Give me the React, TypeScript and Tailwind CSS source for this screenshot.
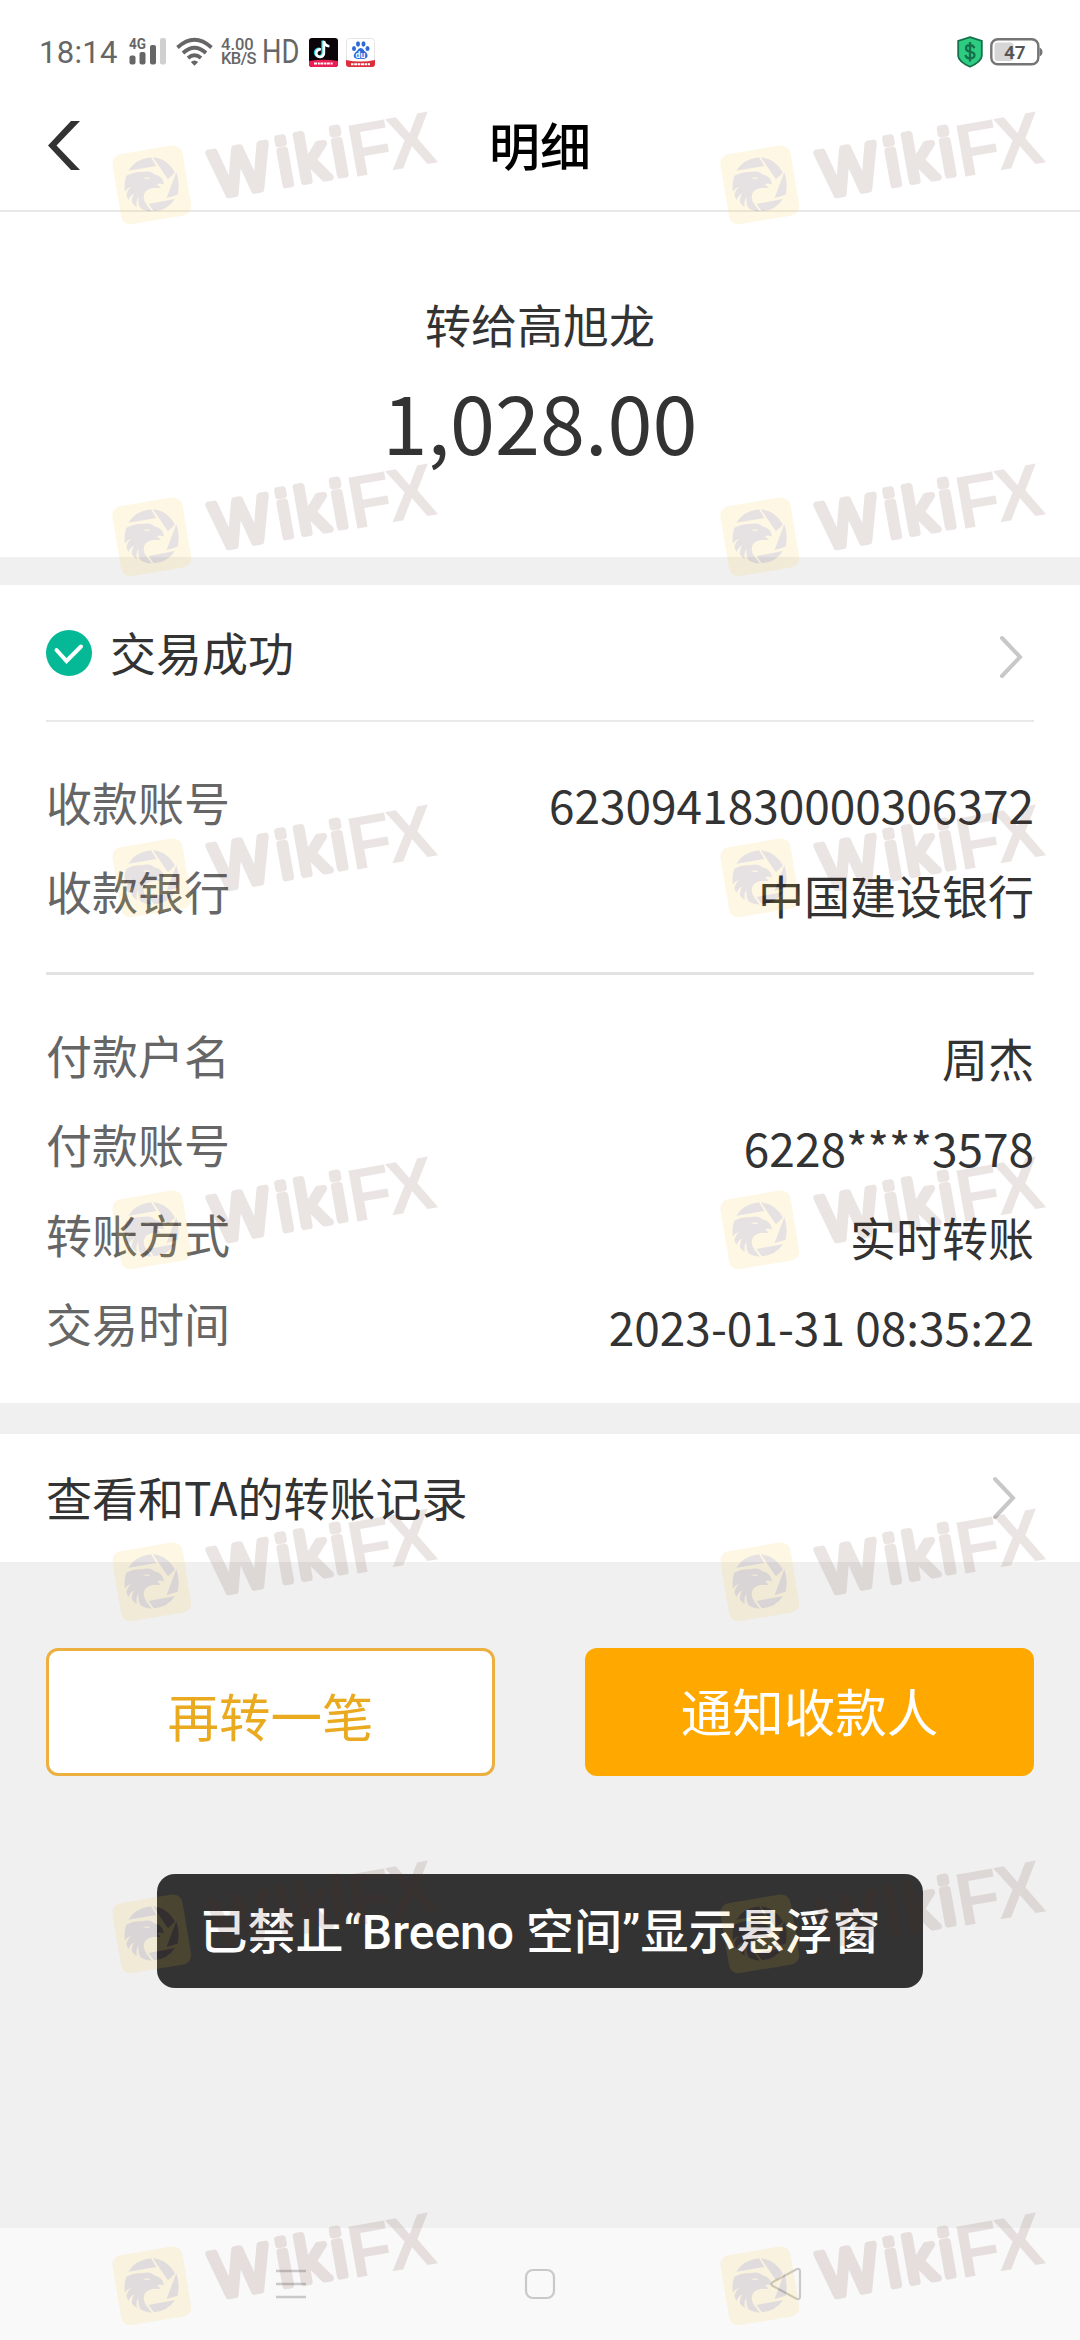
import type { ReactNode } from "react";

type Detail = { label: string; value: string };

const payee: Detail[] = [
  { label: "收款账号", value: "6230941830000306372" },
  { label: "收款银行", value: "中国建设银行" },
];

const payer: Detail[] = [
  { label: "付款户名", value: "周杰" },
  { label: "付款账号", value: "6228****3578" },
  { label: "转账方式", value: "实时转账" },
  { label: "交易时间", value: "2023-01-31 08:35:22" },
];

function StatusBar() {
  return (
    <div className="flex h-[80px] items-center justify-between pt-6 pr-[37px] pl-[39px] font-['Roboto',sans-serif] text-[#666]">
      <div className="flex items-center">
        <span className="w-[90px] text-[31px] leading-none tracking-[0.3px]">18:14</span>
        <svg className="overflow-visible" width="38" height="30" viewBox="0 0 38 30" fill="#666">
          <text x="0" y="11.500" fontSize="14" fontWeight="700" textLength="17" lengthAdjust="spacingAndGlyphs">
            4G
          </text>
          <rect x="0.5" y="18.5" width="6" height="9" rx="2" />
          <rect x="10.5" y="15" width="6" height="12.500" rx="2" />
          <rect x="21" y="8" width="6" height="19.500" rx="2" />
          <rect x="31" y="1" width="6" height="26.500" rx="2" fill="#d0d0d0" />
        </svg>
        <svg className="ml-[9px]" width="37" height="30" viewBox="0 0 37 30" fill="none" stroke="#666" strokeWidth="3.800">
          <path d="M1.500 10.500 Q18.500 -5 35.500 10.500" />
          <path d="M7 16 Q18.500 5.500 30 16" />
          <path d="M12 21 Q18.500 15.500 25 21" />
          <path d="M14.800 25 Q18.500 21.800 22.200 25 L18.500 28.700Z" fill="#666" stroke="none" />
        </svg>
        <div className="ml-2 flex w-[36px] flex-col text-[16.500px] leading-[14px] font-medium">
          <span>4.00</span>
          <span className="tracking-[-0.6px]">KB/S</span>
        </div>
        <span className="ml-[5px] w-[37px] origin-left scale-x-[0.84] text-[32.500px] leading-none">HD</span>
        <svg className="ml-[10px]" width="29" height="29" viewBox="0 0 29 29">
          <rect width="29" height="29" rx="3" fill="#0b0509" />
          <path d="M0 23 Q14 20.500 29 23 V26 Q29 29 26 29 H3 Q0 29 0 26Z" fill="#e91e55" />
          <path d="M14.500 3 V15 A3.800 3.800 0 1 1 11.500 11.500 M14.500 3 Q15.500 8 20 8.300" fill="none" stroke="#25d9e0" strokeWidth="2.600" transform="translate(-0.8 -0.5)" />
          <path d="M14.500 3 V15 A3.800 3.800 0 1 1 11.500 11.500 M14.500 3 Q15.500 8 20 8.300" fill="none" stroke="#fff" strokeWidth="2.600" transform="translate(0.4 0)" />
          <path d="M5 25.500 H24" stroke="#fff" strokeWidth="2.200" strokeDasharray="3 0.8 2 0.6" />
        </svg>
        <svg className="ml-[8px]" width="29" height="29" viewBox="0 0 29 29">
          <rect x="0.500" y="0.500" width="28" height="28" rx="3" fill="#fff" stroke="#e5e5e5" />
          <g fill="#2f6bd8">
            <ellipse cx="8" cy="10.500" rx="2" ry="2.600" />
            <ellipse cx="12" cy="6" rx="2" ry="2.700" />
            <ellipse cx="17.500" cy="6" rx="2" ry="2.700" />
            <ellipse cx="21.500" cy="10.500" rx="2" ry="2.600" />
            <path d="M14.700 10 Q17 10 18.500 13 Q22 15.500 21.500 18.500 Q20.500 21.500 14.700 20.800 Q8.500 21.500 7.800 18.500 Q7.500 15.500 11 13 Q12.500 10 14.700 10Z" />
          </g>
          <text x="9.600" y="19.500" fontSize="8.500" fontWeight="700" fill="#fff">du</text>
          <path d="M0 22 Q14 25 29 22 V26 Q29 29 26 29 H3 Q0 29 0 26Z" fill="#dc2f3c" />
          <path d="M5 26.200 H24" stroke="#fff" strokeWidth="2" strokeDasharray="2.500 0.700 3 0.600" />
        </svg>
      </div>
      <div className="flex items-center">
        <svg width="26" height="32" viewBox="0 0 26 32">
          <path d="M13 1.200 L24.800 5 V20 Q24.500 25.500 13 30.800 Q1.500 25.500 1.200 20 V5Z" fill="#2ecc80" stroke="#14704a" strokeWidth="1.800" />
          <path d="M17.300 12.200 Q16.500 9.200 13 9.200 Q9 9.200 9 12.200 Q9 15 13 15.700 Q17.500 16.500 17.500 19.300 Q17.500 22.300 13 22.300 Q9 22.300 8.500 19 M13 6 V25.500" fill="none" stroke="#14704a" strokeWidth="2.300" />
        </svg>
        <svg className="ml-[7px]" width="53" height="28" viewBox="0 0 53 28">
          <rect x="1.300" y="1.300" width="47" height="25" rx="6.500" fill="#fff" stroke="#757575" strokeWidth="2.400" />
          <rect x="4.500" y="4.500" width="19" height="18.500" rx="3" fill="#d6d6d6" />
          <path d="M49.500 9.500 Q52.500 11 52.500 14 Q52.500 17 49.500 18.500Z" fill="#757575" />
          <text x="14" y="20.500" fontSize="19" fontWeight="600" fill="#555">47</text>
        </svg>
      </div>
    </div>
  );
}

function Chevron({ className }: { className?: string }) {
  return (
    <svg className={className} width="24" height="44" viewBox="0 0 24 44" fill="none" stroke="#c8c8c8" strokeWidth="4" strokeLinecap="round">
      <path d="M3 3 L21 22 L3 41" />
    </svg>
  );
}

function DetailList({ items, className }: { items: Detail[]; className: string }) {
  return (
    <dl className={`px-[46px] ${className}`}>
      {items.map((d) => (
        <div key={d.label} className="flex h-[89.500px] items-center justify-between leading-none">
          <dt className="pb-[2px] text-[#666]">{d.label}</dt>
          <dd className="pt-[5px]">{d.value}</dd>
        </div>
      ))}
    </dl>
  );
}

function ActionButton({ className, children }: { className: string; children: ReactNode }) {
  return (
    <button type="button" className={`h-[128px] w-[449px] rounded-[12px] text-[51.500px] leading-none ${className}`}>
      {children}
    </button>
  );
}

function Watermark() {
  return (
    <svg className="h-[122px] w-[333px] overflow-visible opacity-12" viewBox="55 50 1000 366">
      <rect x="80" y="177" width="213" height="213" rx="28" fill="#f2c328" transform="rotate(-9.5 186.500 283.500)" />
      <g fill="#38101c">
        <path d="M116 241 Q137 207 184 201 L200 227Z" />
        <path d="M190 201 Q233 205 256 247 L235 267Z" />
        <path d="M260 246 Q272 280 264 313 L231 323Z" />
        <path d="M177 341 L256 326 Q234 360 193 363Z" />
        <path d="M110 257 Q128 245 158 245 Q184 240 193 252 Q220 257 223 283 Q213 277 202 281 Q209 288 213 293 Q180 290 167 304 Q155 323 171 343 L186 364 Q166 363 152 353 Q144 338 147 318 Q137 333 142 350 Q133 345 128 338 Q124 328 133 309 Q120 317 117 329 Q109 318 111 310 Q113 299 125 289 Q111 294 106 304 Q102 278 110 257Z" />
      </g>
      <path d="M159 262 Q172 270 184 262 Q172 261 159 262Z" fill="#f2c328" />
      <g fill="#5a281e" transform="translate(350 338) rotate(-10)" className="font-['Liberation_Sans',sans-serif]">
        <g transform="scale(0.95 1)">
          <text x="34 244 303 419" y="-12" fontSize="196" stroke="#5a281e" strokeWidth="20" strokeLinejoin="round">
            Wiki
          </text>
          <text x="470 596" y="0" fontSize="225" fontWeight="700">
            FX
          </text>
        </g>
      </g>
    </svg>
  );
}

function WatermarkRow() {
  return (
    <div className="flex gap-[275px] pl-[108px]">
      <Watermark />
      <Watermark />
    </div>
  );
}

export default function App() {
  return (
    <div className="relative flex h-[2340px] w-[1080px] flex-col overflow-hidden bg-[#f0f0f0] font-['Noto_Sans_CJK_SC',sans-serif] text-[46px] text-[#333]">
      <header className="bg-white">
        <StatusBar />
        <div className="grid h-[132px] grid-cols-[1fr_auto_1fr] items-center border-b-2 border-[#e9e9e9] pl-[48px]">
          <svg width="32" height="49" viewBox="0 0 32 49">
            <path d="M23 0 H32 L8.500 24.500 L32 49 H23 L0 24.500Z" fill="#333" />
          </svg>
          <h1 className="pr-[48px] pb-[2px] text-[51px] leading-none font-medium text-black">明细</h1>
        </div>
      </header>

      <section className="flex h-[345px] flex-col items-center bg-white pt-[79px]">
        <p className="leading-[64px]">转给高旭龙</p>
        <p className="text-[81px] leading-[130px]">1,028.00</p>
      </section>

      <section className="mt-[28px] bg-white">
        <div className="flex h-[135px] items-center pr-[57px] pl-[46px]">
          <svg width="46" height="46" viewBox="0 0 46 46">
            <circle cx="23" cy="23" r="23" fill="#05b996" />
            <path d="M10.500 20 L20.500 31 L35 16.500" fill="none" stroke="#fff" strokeWidth="4" strokeLinecap="round" />
          </svg>
          <span className="ml-[18px] flex-1 pb-[3px] leading-none">交易成功</span>
          <Chevron className="mt-[9px]" />
        </div>
        <div className="mx-[46px] h-[2px] bg-[#e9e9e9]" />
        <DetailList items={payee} className="pt-[35px] pb-[36px]" />
        <div className="mx-[46px] h-[3px] bg-[#e3e3e3]" />
        <DetailList items={payer} className="py-[35px]" />
      </section>

      <section className="mt-[31px] flex h-[128px] items-center justify-between bg-white pr-[64px] pb-[4px] pl-[46px]">
        <span className="leading-none">查看和TA的转账记录</span>
        <Chevron className="mt-[3px]" />
      </section>

      <div className="mt-[86px] flex flex-1 items-start justify-between px-[46px]">
        <ActionButton className="border-3 border-[#ecb040] bg-white pt-[5px] text-[#eaaa20]">再转一笔</ActionButton>
        <ActionButton className="bg-[#ffa800] pb-[4px] text-white">通知收款人</ActionButton>
      </div>

      <nav className="flex h-[112px] items-center justify-between bg-[#f9f9f9] pr-[278px] pl-[276px]">
        <svg width="30" height="30" viewBox="0 0 30 30" stroke="#c9c9c9" strokeWidth="2.500">
          <path d="M0 2 H30 M0 15 H30 M0 28 H30" />
        </svg>
        <svg className="ml-[3px]" width="32" height="32" viewBox="0 0 32 32" fill="none" stroke="#c9c9c9" strokeWidth="2.200">
          <rect x="2" y="2" width="28" height="28" rx="7" />
        </svg>
        <svg width="32" height="34" viewBox="0 0 32 34" fill="none" stroke="#c9c9c9" strokeWidth="2.200">
          <path d="M2.500 15.200 L26.500 2.200 Q30 1 30 4.500 V29.500 Q30 33 26.500 31.800 L2.500 18.800 Q0.500 17 2.500 15.200Z" />
        </svg>
      </nav>

      <div className="absolute top-[1874px] left-[157px] flex h-[114px] w-[766px] items-center justify-center rounded-[18px] bg-[#333] pt-[4px] font-['Roboto','Noto_Sans_CJK_SC',sans-serif] text-[48px] leading-none font-medium whitespace-nowrap text-white">
        已禁止“Breeno 空间”显示悬浮窗
      </div>

      <div className="pointer-events-none absolute top-[107px] left-0 flex flex-col gap-[230px]">
        <WatermarkRow />
        <WatermarkRow />
        <div className="-mt-[11px] flex flex-col gap-[230px]">
          <WatermarkRow />
          <WatermarkRow />
          <WatermarkRow />
          <WatermarkRow />
          <WatermarkRow />
        </div>
      </div>
    </div>
  );
}
